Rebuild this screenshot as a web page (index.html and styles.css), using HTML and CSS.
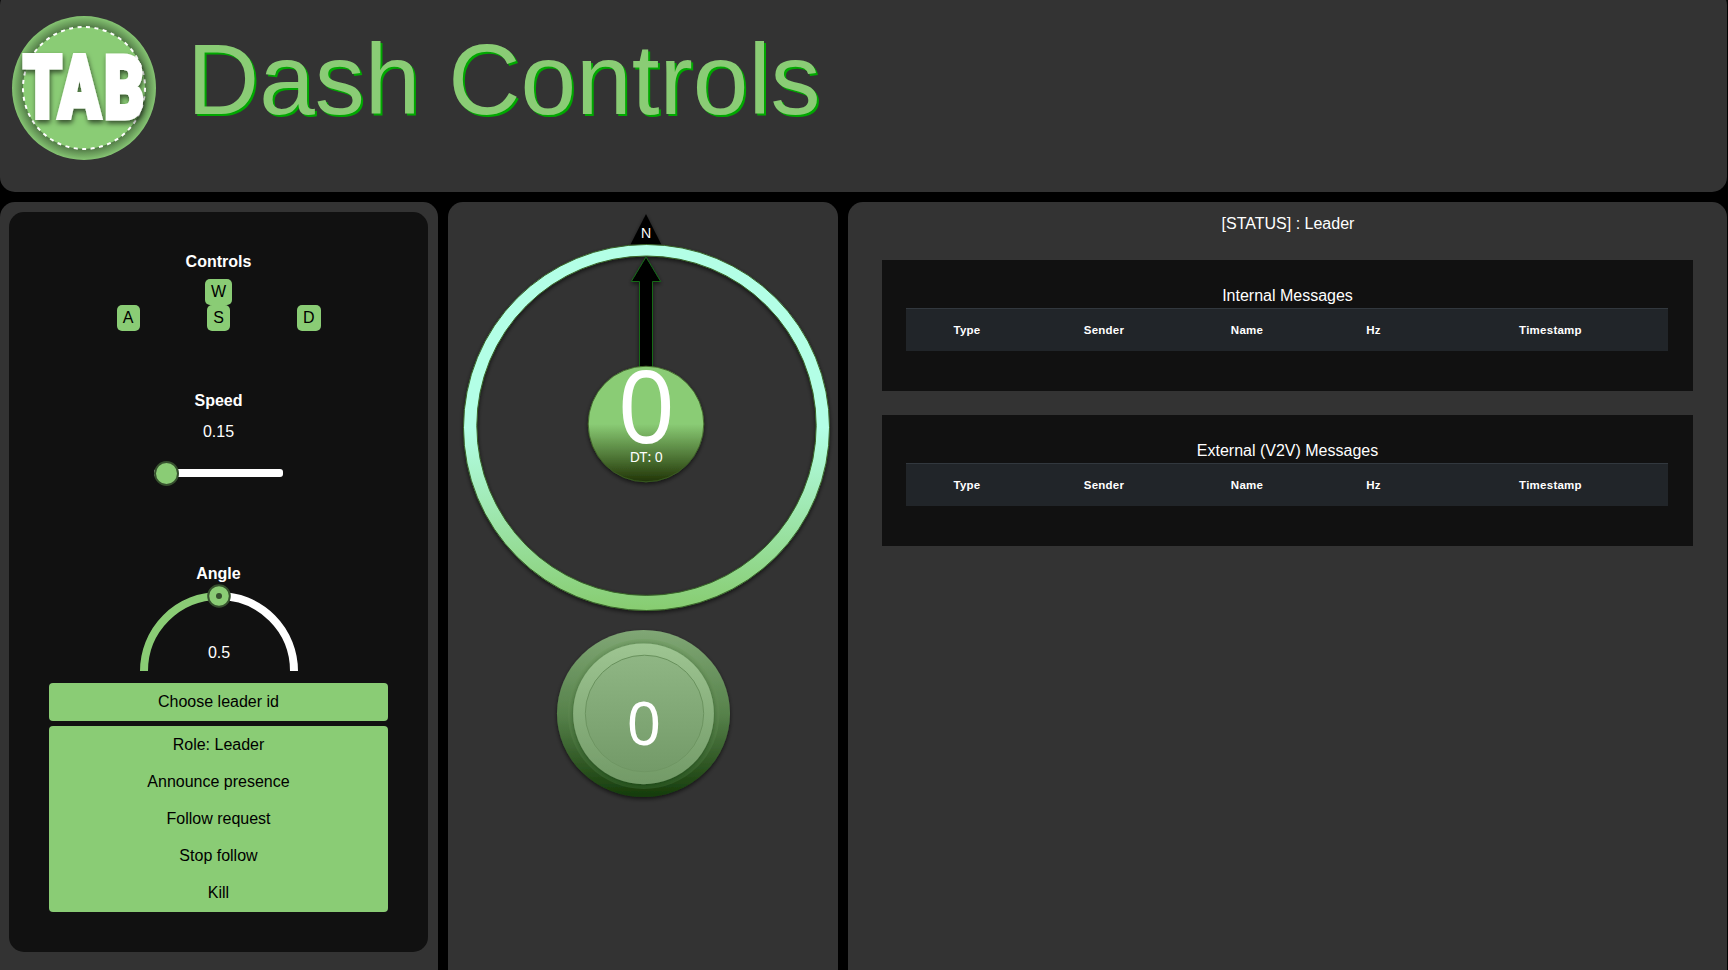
FILE: index.html
```html
<!DOCTYPE html>
<html lang="en">
<head>
<meta charset="utf-8">
<title>Dash Controls</title>
<link rel="stylesheet" href="styles.css">
</head>
<body>
<header class="header">
  <svg class="logo" viewBox="8 12 152 152">
    <defs>
      <radialGradient id="rim" gradientUnits="userSpaceOnUse" cx="84" cy="88" r="72">
        <stop offset=".83" stop-color="#4b7040"/><stop offset=".9" stop-color="#659657"/><stop offset="1" stop-color="#86c573"/>
      </radialGradient>
      <filter id="ts" x="-20%" y="-20%" width="140%" height="150%"><feDropShadow dx="1" dy="3" stdDeviation="2.5" flood-color="#000" flood-opacity=".6"/></filter>
    </defs>
    <circle cx="84" cy="88" r="72" fill="url(#rim)"/>
    <circle cx="84" cy="88" r="61" fill="#8acc75" stroke="#fff" stroke-width="2" stroke-dasharray="4 4.5"/>
    <g filter="url(#ts)">
      <text class="logo-text" transform="scale(.7 1)" x="33 83.6 148.9" y="118">TAB</text>
    </g>
  </svg>
  <h1 class="title">Dash Controls</h1>
</header>
<main class="panels">
  <section class="panel panel-left">
    <div class="control-box">
      <h2 class="label">Controls</h2>
      <div class="keys">
        <kbd class="key key-up">W</kbd>
        <kbd class="key">A</kbd><kbd class="key">S</kbd><kbd class="key">D</kbd>
      </div>
      <h2 class="label label-speed">Speed</h2>
      <p class="value">0.15</p>
      <div class="slider"><span class="thumb"></span></div>
      <h2 class="label label-angle">Angle</h2>
      <svg class="dial" viewBox="139 583 160 88">
        <path d="M144 671A75 75 0 0 1 219 596" fill="none" stroke="#8acc75" stroke-width="8"/>
        <path d="M219 596A75 75 0 0 1 294 671" fill="none" stroke="#fff" stroke-width="8"/>
        <circle cx="219" cy="596" r="10.8" fill="#8acc75" stroke="#36502e" stroke-width="2"/>
        <circle cx="219" cy="596" r="3" fill="#36502e"/>
        <text class="dial-text" x="219" y="658">0.5</text>
      </svg>
      <button class="btn">Choose leader id</button>
      <div class="btn-group">
        <button>Role: Leader</button>
        <button>Announce presence</button>
        <button>Follow request</button>
        <button>Stop follow</button>
        <button>Kill</button>
      </div>
    </div>
  </section>
  <section class="panel panel-mid">
    <svg class="gauges" viewBox="448 202 390 768">
      <defs>
        <linearGradient id="ring" x1="0" y1="0" x2="0" y2="1"><stop offset=".5" stop-color="#b3ffe6"/><stop offset="1" stop-color="#87cc70"/></linearGradient>
        <linearGradient id="hub" x1="0" y1="0" x2="0" y2="1"><stop offset=".5" stop-color="#8acc75"/><stop offset="1" stop-color="#213506"/></linearGradient>
        <linearGradient id="outer" x1="0" y1="0" x2="0" y2="1"><stop offset="0" stop-color="#80a775"/><stop offset=".5" stop-color="#57824b"/><stop offset="1" stop-color="#153b0a"/></linearGradient>
        <linearGradient id="groove" x1="0" y1="0" x2="0" y2="1"><stop offset="0" stop-color="#76a069"/><stop offset=".5" stop-color="#5a854d"/><stop offset="1" stop-color="#2a5620"/></linearGradient>
        <linearGradient id="bevel" x1="0" y1="0" x2="0" y2="1"><stop offset="0" stop-color="#9ec592"/><stop offset="1" stop-color="#729a67"/></linearGradient>
        <linearGradient id="face" x1="0" y1="0" x2="0" y2="1"><stop offset="0" stop-color="#8fb684"/><stop offset="1" stop-color="#739a68"/></linearGradient>
        <linearGradient id="edge" x1="0" y1="0" x2="0" y2="1"><stop offset="0" stop-color="#67905b"/><stop offset="1" stop-color="#6f9663"/></linearGradient>
        <filter id="sh" x="-10%" y="-10%" width="120%" height="120%"><feDropShadow dx="0" dy="2" stdDeviation="2" flood-color="#000" flood-opacity=".6"/></filter>
        <filter id="soft" x="-10%" y="-10%" width="120%" height="120%"><feDropShadow dx="0" dy="1" stdDeviation="2" flood-color="#0c2a04" flood-opacity=".45"/></filter>
      </defs>
      <path d="M646 214L661.3 244.500H630.500Z" fill="#000" filter="url(#sh)"/>
      <text class="gauge-text" x="646" y="238">N</text>
      <path filter="url(#sh)" fill-rule="evenodd" fill="url(#ring)" stroke="#386428" stroke-width="1" d="M646.500 244.500a183 183 0 0 1 0 366a183 183 0 0 1 0-366ZM646.500 256a169.700 169.700 0 0 0 0 339.400a169.700 169.700 0 0 0 0-339.400Z"/>
      <path d="M646 257L660.700 281.500H652.500V380H639.500V281.500H631.300Z" fill="#000" stroke="#126b19" filter="url(#sh)"/>
      <circle cx="646" cy="424" r="57.800" fill="url(#hub)" stroke="#3c5f25" stroke-width=".8" filter="url(#sh)"/>
      <text class="gauge-text gauge-lg" x="646.3" y="442.5">0</text>
      <text class="gauge-text" x="646.3" y="462">DT: 0</text>
      <ellipse cx="643.5" cy="713.5" rx="86.5" ry="83.5" fill="url(#outer)" filter="url(#sh)"/>
      <ellipse cx="643.7" cy="714" rx="75.700" ry="75" fill="url(#groove)"/>
      <circle cx="643.5" cy="713.8" r="70.400" fill="url(#bevel)" filter="url(#soft)"/>
      <ellipse cx="644.500" cy="713.5" rx="59.200" ry="58.300" fill="url(#face)" stroke="url(#edge)" stroke-width="1"/>
      <text class="gauge-text gauge-md" x="643.8" y="745">0</text>
    </svg>
  </section>
  <section class="panel panel-right">
    <p class="status">[STATUS] : Leader</p>
    <div class="card">
      <h3 class="card-title">Internal Messages</h3>
      <table class="table">
        <tr><th class="c1">Type</th><th class="c2">Sender</th><th class="c3">Name</th><th class="c4">Hz</th><th>Timestamp</th></tr>
      </table>
    </div>
    <div class="card">
      <h3 class="card-title">External (V2V) Messages</h3>
      <table class="table">
        <tr><th class="c1">Type</th><th class="c2">Sender</th><th class="c3">Name</th><th class="c4">Hz</th><th>Timestamp</th></tr>
      </table>
    </div>
  </section>
</main>
</body>
</html>
```
FILE: styles.css
```css
* { box-sizing: border-box; }
html, body { height: 100%; }
body {
  margin: 0;
  background: #000;
  color: #fff;
  font: 16px/24px Arial, "Liberation Sans", sans-serif;
  overflow: hidden;
  display: flex;
  flex-direction: column;
}
h1, h2, h3, p { margin: 0; }
.header {
  height: 202px;
  margin: -10px 1px 10px 0;
  padding: 22px 8px 0;
  flex: none;
  display: flex;
  background: #333;
  border-radius: 15px;
}
.logo { width: 152px; height: 152px; flex: none; }
.logo-text {
  font: 900 88px Roboto, sans-serif;
  fill: #fff;
  stroke: #fff;
  stroke-width: 5px;
}
.title {
  margin: 7px 0 0 27px;
  font-size: 100px;
  line-height: 120px;
  font-weight: 400;
  color: #8acc75;
  text-shadow: 2px 2px 0 #00a800;
}
.panels { flex: 1; display: flex; gap: 10px; padding-right: 1px; min-height: 0; }
.panel { background: #333; border-radius: 15px 15px 0 0; }
.panel-left { width: 438px; padding: 10px 10px 18px 9px; }
.control-box {
  height: 740px;
  padding: 38px 40px 0;
  background: #111;
  border-radius: 15px;
  display: flex;
  flex-direction: column;
  align-items: center;
}
.label { font-size: 16px; font-weight: 700; line-height: 24px; }
.keys {
  width: 271px;
  margin-top: 5px;
  display: grid;
  grid-template-columns: repeat(3, 1fr);
  justify-items: center;
}
.key {
  height: 26px;
  padding: 4px 6px;
  font: 16px/18px Arial, "Liberation Sans", sans-serif;
  color: #000;
  background: #8acc75;
  border-radius: 5px;
}
.key-up { grid-column: 1 / 4; }
.label-speed { margin-top: 58px; }
.value { margin-top: 7px; }
.slider {
  width: 129px;
  height: 8px;
  margin-top: 25px;
  background: #fff;
  border-radius: 3px;
  display: flex;
  align-items: center;
  flex: none;
}
.thumb {
  width: 25px;
  height: 25px;
  flex: none;
  background: #8acc75;
  border: 2px solid #36502e;
  border-radius: 50%;
}
.label-angle { margin-top: 85px; }
.dial { width: 160px; height: 88px; margin: -3px 0 0 1px; flex: none; }
.dial-text { fill: #fff; text-anchor: middle; }
button {
  width: 100%;
  height: 37px;
  padding: 0;
  border: 0;
  background: none;
  color: #000;
  font: inherit;
}
.btn { height: 38px; margin-top: 12px; flex: none; background: #8acc75; border-radius: 4px; }
.btn-group { width: 100%; height: 186px; margin-top: 5px; background: #8acc75; border-radius: 4px; display: flex; flex-direction: column; }
.panel-mid { width: 390px; }
.gauges { display: block; width: 390px; height: 768px; }
.gauge-text { font: 14px "Noto Sans", sans-serif; fill: #fff; text-anchor: middle; }
.gauge-lg { font-size: 100px; }
.gauge-md { font-size: 60px; }
.panel-right { flex: 1; padding: 10px 34px 0; text-align: center; }
.status { margin-bottom: 24px; padding-left: 1px; }
.card { height: 131px; padding: 24px 25px 0 24px; margin-bottom: 24px; background: #111; }
.card-title { padding-left: 1px; font-size: 16px; font-weight: 400; line-height: 24px; }
.table { width: 100%; border-spacing: 0; table-layout: fixed; }
.table th {
  height: 43px;
  padding: 0;
  background: #212529;
  border-top: 1px solid #32383e;
  font-size: 11.5px;
  letter-spacing: .25px;
  line-height: 18px;
}
.c1 { width: 122px; }
.c2 { width: 152px; }
.c3 { width: 134px; }
.c4 { width: 119px; }
```
